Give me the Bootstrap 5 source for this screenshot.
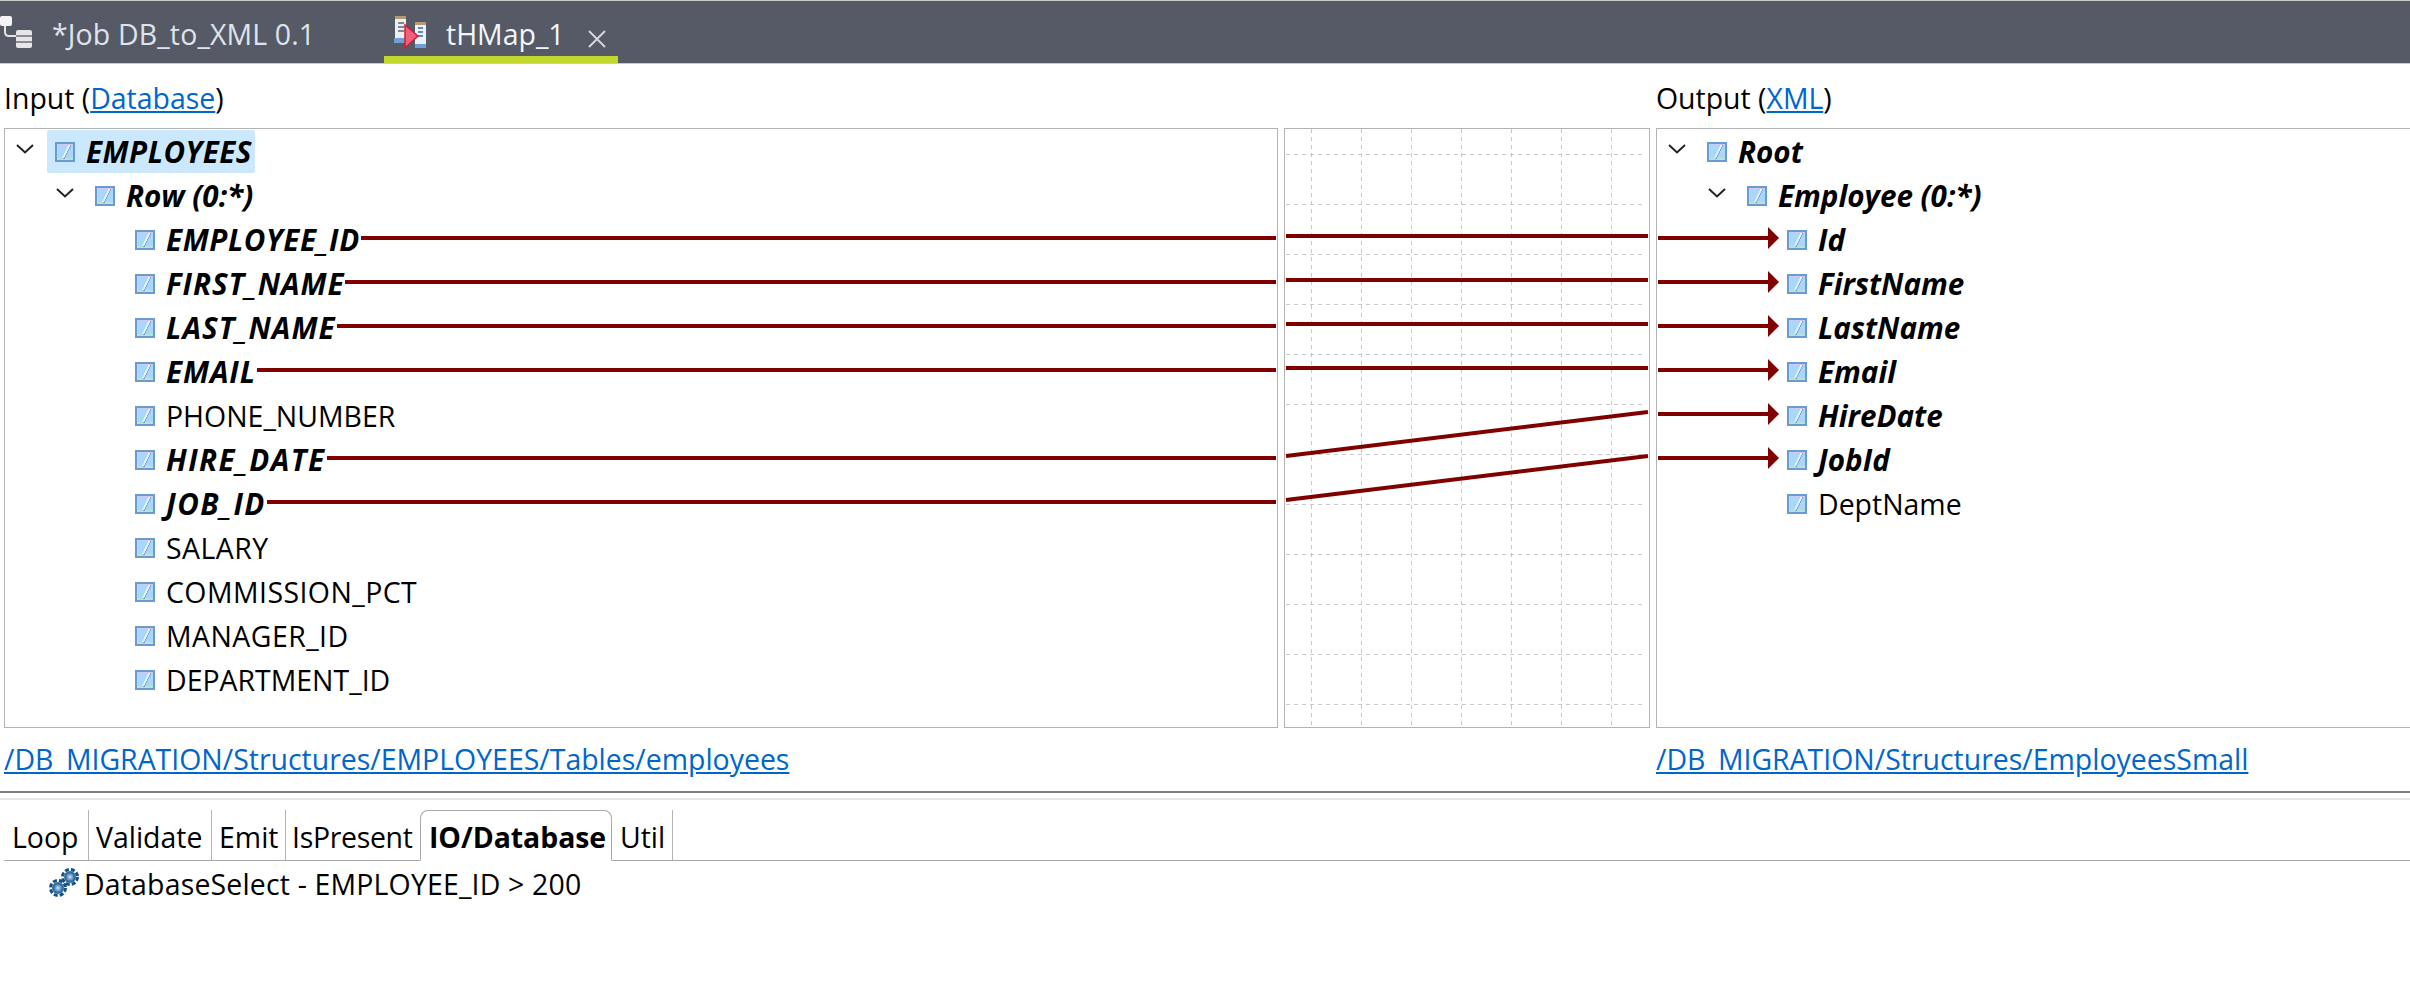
<!DOCTYPE html>
<html lang="en"><head><meta charset="utf-8"><title>tHMap_1</title>
<link href="https://cdn.jsdelivr.net/npm/bootstrap@5.3.0/dist/css/bootstrap.min.css" rel="stylesheet">
<style>
html,body{height:989px;overflow:hidden;background:#fff}
body{font-family:"Open Sans","Liberation Sans",sans-serif;font-size:28.45px;line-height:42px;color:#000}
.ed-bar{height:64px;background:#565a66;border-top:1px solid #c9c9c9;border-bottom:1px solid #c9c9c9}
.ed-tab{height:62px;color:#dfe4ea;border-bottom:7px solid transparent}
.ed-job{width:384px}
.ed-job .ti{letter-spacing:.15px}
.ed-map{width:234px;border-bottom-color:#c1d72e;color:#f2f6fa;padding-left:10px}
.ti{margin-left:20px;margin-top:12px}
.ed-map .ti{width:142px}
.tab-ico{width:32px;height:34px;flex:none;margin-top:14px}
.ed-job .tab-ico{margin-top:15px}
.x-ico{width:18px;height:18px;margin-top:29px}
.stage{display:grid;grid-template-columns:1274px 366px 1fr;column-gap:6px;padding-left:4px;grid-template-rows:64px 600px 63px}
.lab{align-self:center;padding-top:4px;white-space:nowrap}
.lab.pth{padding-top:0;margin-top:-1px}
.lnk{color:#0066cc;text-decoration:underline}
.pane{border:1px solid #b4b4b4;height:600px;overflow:hidden;padding-top:1px}
.pane-out{border-right:0}
.pane-mid{padding-top:0}
.pane-mid svg{display:block}
.tr{height:44px;display:flex;align-items:center;white-space:nowrap}
.sel{width:208px;background:#cce8ff;border-radius:2px;height:43px;margin-bottom:1px;padding-left:8px}
.chev{width:18px;height:10px;flex:none;margin-bottom:6px;margin-right:21px}
.lead0 .chev{margin-right:13px}
.pane-out .lead0 .chev{margin-right:21px}
.cell{width:20px;height:20px;flex:none;margin-right:11px}
.b{font-weight:700;font-style:italic;font-size:29.6px}
.cap{letter-spacing:.9px}
.sel.cap{letter-spacing:.5px}
.cap-s{letter-spacing:.6px}
.cap-m{letter-spacing:1.05px}
.cap-l{letter-spacing:1.45px}
.wide{letter-spacing:.45px}
.lead0{padding-left:11px}
.lead1{padding-left:51px}
.lead2{padding-left:130px}
.wire{flex:1 1 auto;height:4px;background:#800000;align-self:flex-start;margin:18px 1px 0 1px}
.arr{padding-left:1px}
.arrow{width:121px;height:22px;flex:none;margin-right:8px;margin-bottom:4px}
.sash{height:2px;background:#808080}
.sash2{height:2px;background:#e6e6e6;margin-top:5px}
.low{margin:10px 0 0 4px;height:51px;border-bottom:1px solid #aaa;flex-wrap:nowrap}
.lt{height:50px;display:flex;align-items:flex-end;padding:0 0 2px 7px;border-right:1px solid #b4b4b4;color:#000;text-decoration:none;flex:none;white-space:nowrap}
.t1{width:85px;padding-left:8px}.t2{width:123px}.t3{width:74px}
.t4{width:134px;border-right:0;letter-spacing:-.3px;padding-left:6px}
.lt.on{width:192px;font-weight:700;border:1px solid #aaa;border-bottom:1px solid #fff;border-radius:8px 8px 0 0;height:51px;padding:0 0 2px 8px;letter-spacing:-.05px}
.t6{width:61px;padding-left:8px}
.item{padding-left:49px;margin-top:1px;letter-spacing:.18px}
.gears{width:30px;height:30px;flex:none;margin:0 5px 2px 0}
</style></head><body>
<svg width="0" height="0" class="position-absolute">
<defs>
<symbol id="cellm" viewBox="0 0 20 20" shape-rendering="crispEdges">
<rect width="20" height="20" fill="#6a9bd0"/>
<rect x="2" y="2" width="16" height="16" fill="#a9d6fb"/>
<rect x="2" y="2" width="16" height="1" fill="#cdcbf0"/>
<rect x="2" y="3" width="1" height="14" fill="#c3d6f5"/>
<rect x="2" y="16" width="16" height="2" fill="#b9e3d6"/>
<path d="M15 3h1v2h-1v2h-1v2h-1v2h-1v2h-1v2h-1v2H8v-1h1v-2h1v-2h1V9h1V7h1V5h1V3z" fill="#7f9fcc"/>
<path d="M14 3h1v2h-1v2h-1v2h-1v2h-1v2h-1v2H9v1H7v-1h1v-2h1v-2h1V9h1V7h1V5h1V3z" fill="#e4f3fd"/>
</symbol>
<symbol id="chevm" viewBox="0 0 18 10"><path d="M1 1l8 7.5L17 1" fill="none" stroke="#222" stroke-width="2"/></symbol>
<symbol id="arrm" viewBox="0 0 121 22"><rect y="9" width="112" height="4" fill="#800000"/><path d="M110 0l11 11-11 11z" fill="#800000"/></symbol>
</defs>
</svg>

<nav class="ed-bar d-flex">
 <div class="ed-tab ed-job d-flex align-items-start">
  <svg class="tab-ico" viewBox="0 0 32 34"><rect x="0" y="0" width="12" height="10" rx="2" fill="#f4f4f4"/><path d="M5 10v6q0 4 4 4h8" fill="none" stroke="#e4e4e4" stroke-width="2"/><rect x="16" y="14" width="16" height="18" rx="2" fill="#e6e6e6"/><path d="M16 20h16M16 26h16" stroke="#8a8c93" stroke-width="2"/></svg>
  <span class="ti">*Job DB_to_XML 0.1</span>
 </div>
 <div class="ed-tab ed-map d-flex align-items-start">
  <svg class="tab-ico" viewBox="0 0 32 34" shape-rendering="crispEdges"><rect x="1" y="1" width="11" height="22" fill="#eceff4"/><rect x="1" y="1" width="11" height="3" fill="#b39a78"/><rect x="4" y="7" width="6" height="2" fill="#7e8794"/><rect x="4" y="11" width="6" height="2" fill="#7e8794"/><rect x="4" y="15" width="6" height="2" fill="#7e8794"/><rect y="23" width="12" height="5" fill="#6ea0d6"/><rect x="21" y="7" width="11" height="22" fill="#eaf2f8"/><rect x="21" y="7" width="11" height="3" fill="#b39a78"/><rect x="24" y="12" width="5" height="2" fill="#5f8bb8"/><rect x="24" y="16" width="5" height="2" fill="#5f8bb8"/><rect x="24" y="20" width="5" height="2" fill="#5f8bb8"/><rect x="21" y="29" width="11" height="4" fill="#6ea0d6"/><path d="M11 10l13 11-13 12z" fill="#f0607a" stroke="#d11a35" stroke-width="1.5" shape-rendering="auto"/></svg>
  <span class="ti">tHMap_1</span>
  <svg class="x-ico" viewBox="0 0 18 18"><path d="M1 1l16 16M17 1L1 17" stroke="#d4d6da" stroke-width="2" fill="none"/></svg>
 </div>
</nav>

<main class="stage">
 <div class="lab">Input (<a class="lnk" href="#">Database</a>)</div>
 <div></div>
 <div class="lab">Output (<a class="lnk" href="#">XML</a>)</div>

 <ul class="pane list-unstyled mb-0">
  <li class="tr lead0"><svg class="chev"><use href="#chevm"/></svg><div class="d-flex align-items-center sel b cap"><svg class="cell"><use href="#cellm"/></svg>EMPLOYEES</div></li>
  <li class="tr lead1 b"><svg class="chev"><use href="#chevm"/></svg><svg class="cell"><use href="#cellm"/></svg>Row (0:*)</li>
  <li class="tr lead2 b cap-s"><svg class="cell"><use href="#cellm"/></svg>EMPLOYEE_ID<span class="wire"></span></li>
  <li class="tr lead2 b cap"><svg class="cell"><use href="#cellm"/></svg>FIRST_NAME<span class="wire"></span></li>
  <li class="tr lead2 b cap-m"><svg class="cell"><use href="#cellm"/></svg>LAST_NAME<span class="wire"></span></li>
  <li class="tr lead2 b cap"><svg class="cell"><use href="#cellm"/></svg>EMAIL<span class="wire"></span></li>
  <li class="tr lead2"><svg class="cell"><use href="#cellm"/></svg>PHONE_NUMBER</li>
  <li class="tr lead2 b cap-l"><svg class="cell"><use href="#cellm"/></svg>HIRE_DATE<span class="wire"></span></li>
  <li class="tr lead2 b cap-l"><svg class="cell"><use href="#cellm"/></svg>JOB_ID<span class="wire"></span></li>
  <li class="tr lead2 wide"><svg class="cell"><use href="#cellm"/></svg>SALARY</li>
  <li class="tr lead2 wide"><svg class="cell"><use href="#cellm"/></svg>COMMISSION_PCT</li>
  <li class="tr lead2 wide"><svg class="cell"><use href="#cellm"/></svg>MANAGER_ID</li>
  <li class="tr lead2"><svg class="cell"><use href="#cellm"/></svg>DEPARTMENT_ID</li>
 </ul>

 <div class="pane pane-mid">
  <svg width="364" height="598" viewBox="0 0 364 598">
   <g stroke="#c8c8c8" stroke-width="1" stroke-dasharray="4 4" fill="none" shape-rendering="crispEdges">
    <path d="M26 0V598M76 0V598M126 0V598M176 0V598M226 0V598M276 0V598M326 0V598"/>
    <path d="M1 25H361M1 75H361M1 125H361M1 175H361M1 225H361M1 275H361M1 325H361M1 375H361M1 425H361M1 475H361M1 525H361M1 575H361"/>
   </g>
   <g stroke="#800000" stroke-width="4" fill="none">
    <path d="M1 107H363M1 151H363M1 195H363M1 239H363M1 327L363 283M1 371L363 327"/>
   </g>
  </svg>
 </div>

 <ul class="pane pane-out list-unstyled mb-0">
  <li class="tr lead0 b"><svg class="chev"><use href="#chevm"/></svg><svg class="cell"><use href="#cellm"/></svg>Root</li>
  <li class="tr lead1 b"><svg class="chev"><use href="#chevm"/></svg><svg class="cell"><use href="#cellm"/></svg>Employee (0:*)</li>
  <li class="tr arr b"><svg class="arrow"><use href="#arrm"/></svg><svg class="cell"><use href="#cellm"/></svg>Id</li>
  <li class="tr arr b"><svg class="arrow"><use href="#arrm"/></svg><svg class="cell"><use href="#cellm"/></svg>FirstName</li>
  <li class="tr arr b"><svg class="arrow"><use href="#arrm"/></svg><svg class="cell"><use href="#cellm"/></svg>LastName</li>
  <li class="tr arr b"><svg class="arrow"><use href="#arrm"/></svg><svg class="cell"><use href="#cellm"/></svg>Email</li>
  <li class="tr arr b"><svg class="arrow"><use href="#arrm"/></svg><svg class="cell"><use href="#cellm"/></svg>HireDate</li>
  <li class="tr arr b"><svg class="arrow"><use href="#arrm"/></svg><svg class="cell"><use href="#cellm"/></svg>JobId</li>
  <li class="tr lead2"><svg class="cell"><use href="#cellm"/></svg>DeptName</li>
 </ul>

 <div class="lab pth"><a class="lnk" href="#">/DB_MIGRATION/Structures/EMPLOYEES/Tables/employees</a></div>
 <div></div>
 <div class="lab pth"><a class="lnk" href="#">/DB_MIGRATION/Structures/EmployeesSmall</a></div>
</main>

<div class="sash"></div>
<div class="sash2"></div>

<nav class="nav low">
 <a class="lt t1" href="#">Loop</a>
 <a class="lt t2" href="#">Validate</a>
 <a class="lt t3" href="#">Emit</a>
 <a class="lt t4" href="#">IsPresent</a>
 <a class="lt on" href="#">IO/Database</a>
 <a class="lt t6" href="#">Util</a>
</nav>

<div class="tr item">
 <svg class="gears" viewBox="0 0 30 30">
  <g fill="none">
   <circle cx="21" cy="9" r="7.5" stroke="#174f86" stroke-width="3" stroke-dasharray="4 2"/>
   <circle cx="21" cy="9" r="6" fill="#2f6fa6"/><circle cx="21" cy="9" r="3.5" fill="#6f9cc6"/><circle cx="21" cy="9" r="1.8" fill="#c3d0e2"/>
   <circle cx="9" cy="20" r="7.5" stroke="#174f86" stroke-width="3" stroke-dasharray="4 2"/>
   <circle cx="9" cy="20" r="6" fill="#2f6fa6"/><circle cx="9" cy="20" r="3.5" fill="#6f9cc6"/><circle cx="9" cy="20" r="1.8" fill="#c3d0e2"/>
  </g>
 </svg>
 DatabaseSelect - EMPLOYEE_ID &gt; 200
</div>
</body></html>
